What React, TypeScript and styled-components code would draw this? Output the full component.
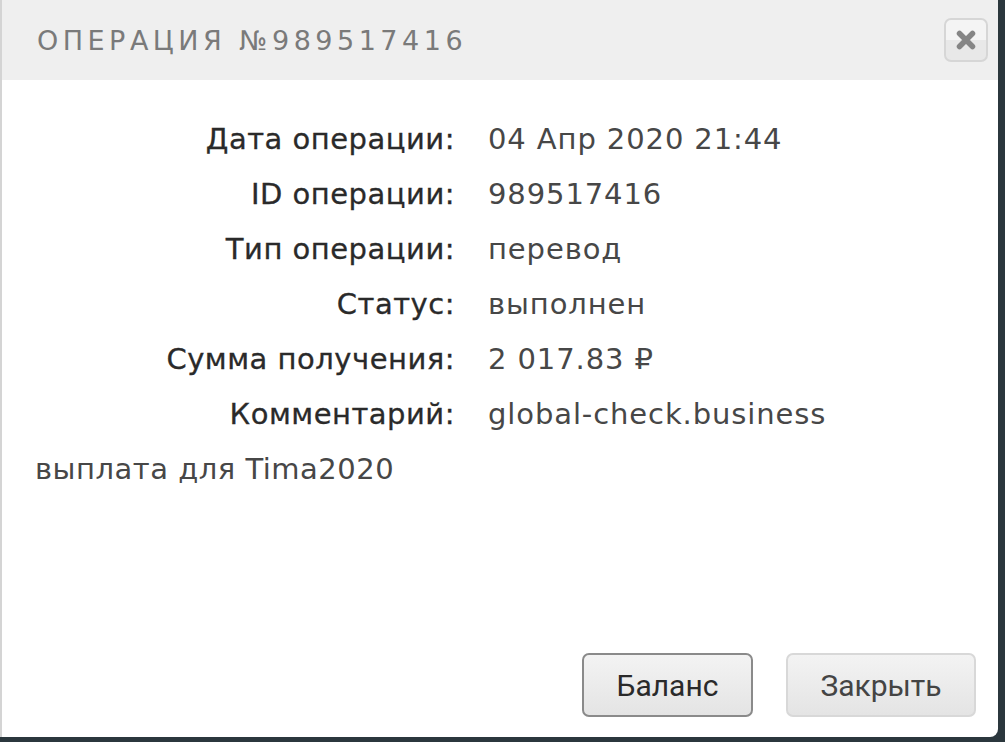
import React from "react";
import styled, { createGlobalStyle } from "styled-components";

const Global = createGlobalStyle`
  html, body { margin: 0; padding: 0; background: #2b373d; }
  body { width: 1005px; height: 742px; overflow: hidden; }
`;

const Modal = styled.div`
  box-sizing: border-box;
  width: 998px;
  height: 737px;
  background: #fff;
  border-left: 2px solid #d4d4d4;
  border-bottom-right-radius: 8px;
  display: flex;
  flex-direction: column;
  font-family: "DejaVu Sans", sans-serif;
`;

const Header = styled.div`
  height: 80px;
  background: #efefef;
  display: flex;
  align-items: center;
  justify-content: space-between;
  padding: 0 10px 0 35px;
  flex-shrink: 0;
`;

const Title = styled.h1`
  margin: 0;
  font-family: "DejaVu Sans", sans-serif;
  font-weight: normal;
  font-size: 27px;
  letter-spacing: 4.5px;
  color: #7a7a7a;
`;

const CloseBtn = styled.button`
  width: 44px;
  height: 44px;
  box-sizing: border-box;
  border: 2px solid #d6d6d6;
  border-radius: 7px;
  background: linear-gradient(#f4f4f4 50%, #e8e8e8 50%);
  display: flex;
  align-items: center;
  justify-content: center;
  padding: 0;
`;

const Body = styled.div`
  flex: 1;
  padding: 31px 0 0 33px;
  display: flex;
  flex-direction: column;
`;

const Row = styled.div`
  display: flex;
  height: 55px;
  align-items: center;
  font-size: 29px;
`;

const Label = styled.div`
  width: 453px;
  text-align: right;
  color: #2a2a2a;
  padding-right: 33px;
  box-sizing: border-box;
  flex-shrink: 0;
  letter-spacing: 0.5px;
  -webkit-text-stroke: 0.3px #2a2a2a;
`;

const Value = styled.div`
  color: #474747;
  letter-spacing: 0.9px;
`;

const Extra = styled.div`
  font-size: 29px;
  color: #474747;
  letter-spacing: 0.5px;
  height: 55px;
  display: flex;
  align-items: center;
`;

const Footer = styled.div`
  margin-top: auto;
  display: flex;
  justify-content: flex-end;
  gap: 33px;
  padding: 0 22px 20px 0;
`;

const Button = styled.button<{ $focused?: boolean }>`
  height: 64px;
  box-sizing: border-box;
  border-radius: 7px;
  border: 2px solid ${(p) => (p.$focused ? "#8a8a8a" : "#d8d8d8")};
  background: linear-gradient(#f3f3f3, #e4e4e4);
  font-family: Roboto, sans-serif;
  font-size: 30px;
  color: ${(p) => (p.$focused ? "#2a2a2a" : "#444")};
  padding: 0;
  width: ${(p) => (p.$focused ? "171px" : "190px")};
`;

const rows: [string, string][] = [
  ["Дата операции:", "04 Апр 2020 21:44"],
  ["ID операции:", "989517416"],
  ["Тип операции:", "перевод"],
  ["Статус:", "выполнен"],
  ["Сумма получения:", "2 017.83 ₽"],
  ["Комментарий:", "global-check.business"],
];

export default function App() {
  return (
    <>
      <Global />
      <Modal>
        <Header>
          <Title>ОПЕРАЦИЯ №989517416</Title>
          <CloseBtn aria-label="close">
            <svg width="20" height="20" viewBox="0 0 20 20">
              <path d="M3.5 3.5 L16.5 16.5 M16.5 3.5 L3.5 16.5" stroke="#858585" strokeWidth="5.5" strokeLinecap="round" />
            </svg>
          </CloseBtn>
        </Header>
        <Body>
          {rows.map(([l, v]) => (
            <Row key={l}>
              <Label>{l}</Label>
              <Value>{v}</Value>
            </Row>
          ))}
          <Extra>выплата для Tima2020</Extra>
        </Body>
        <Footer>
          <Button $focused>Баланс</Button>
          <Button>Закрыть</Button>
        </Footer>
      </Modal>
    </>
  );
}
